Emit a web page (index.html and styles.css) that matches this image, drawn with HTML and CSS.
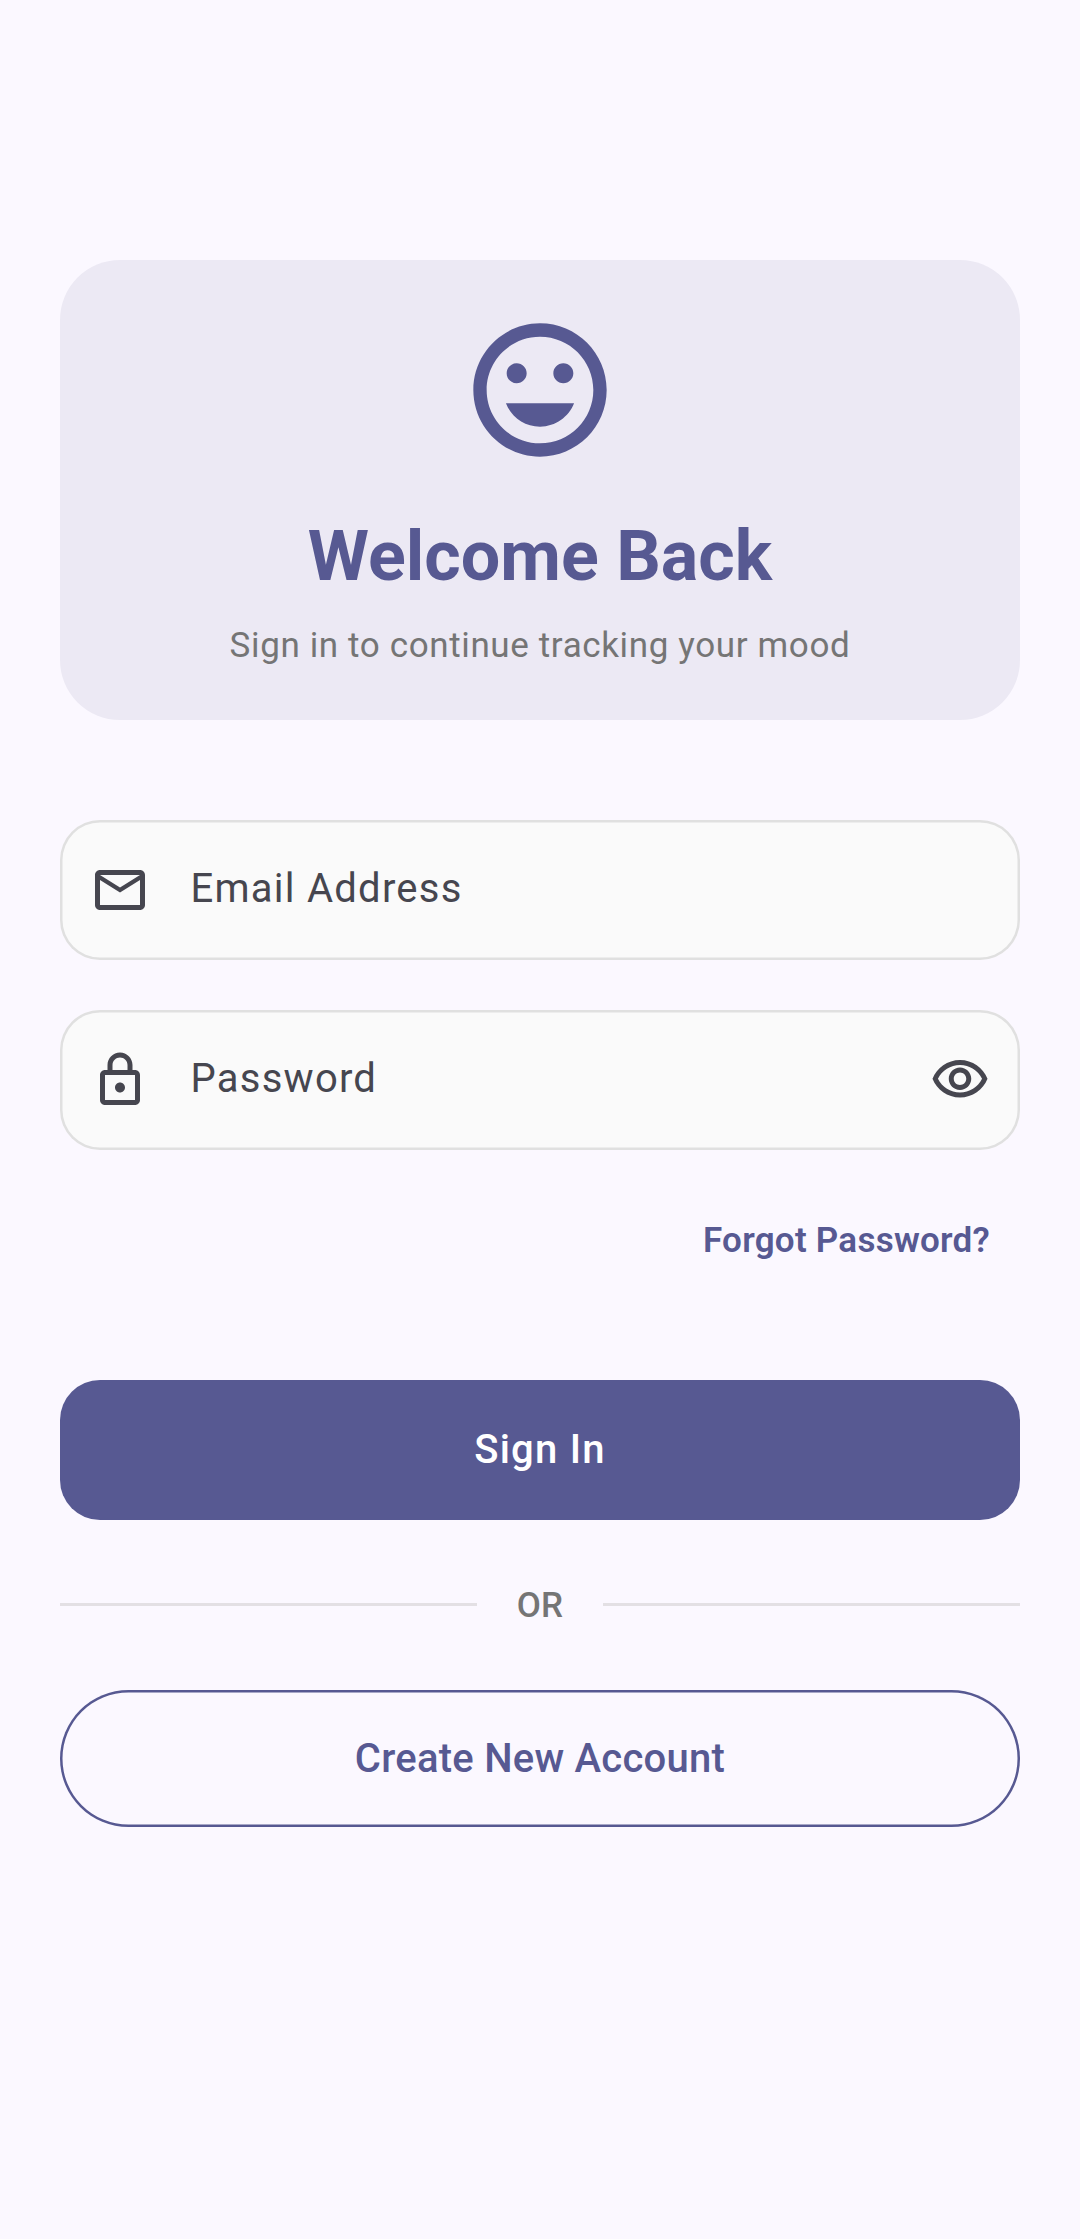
FILE: index.html
```html
<!DOCTYPE html>
<html lang="en">
<head>
<meta charset="utf-8">
<title>Sign In</title>
<link rel="stylesheet" href="styles.css">
</head>
<body>
<main class="screen">
  <section class="hero">
    <svg class="hero-icon" viewBox="0 0 24 24" aria-hidden="true"><path d="M11.99 2C6.47 2 2 6.48 2 12s4.47 10 9.99 10C17.52 22 22 17.52 22 12S17.52 2 11.99 2zM12 20c-4.42 0-8-3.58-8-8s3.58-8 8-8 8 3.58 8 8-3.58 8-8 8zm3.500-9c.83 0 1.500-.67 1.500-1.500S16.330 8 15.500 8 14 8.670 14 9.500s.67 1.500 1.500 1.500zm-7 0c.83 0 1.500-.67 1.500-1.500S9.330 8 8.500 8 7 8.670 7 9.500 7.670 11 8.500 11zm3.500 6.500c2.330 0 4.310-1.460 5.110-3.500H6.890c.8 2.040 2.780 3.500 5.110 3.500z"/></svg>
    <h1 class="title">Welcome Back</h1>
    <p class="subtitle">Sign in to continue tracking your mood</p>
  </section>
  <form class="form">
    <div class="field">
      <svg class="icon" viewBox="0 0 24 24" aria-hidden="true"><path d="M22 6c0-1.100-.9-2-2-2H4c-1.100 0-2 .9-2 2v12c0 1.100.9 2 2 2h16c1.100 0 2-.9 2-2V6zm-2 0l-8 5-8-5h16zm0 12H4V8l8 5 8-5v10z"/></svg>
      <span class="label">Email Address</span>
    </div>
    <div class="field">
      <svg class="icon" viewBox="0 0 24 24" aria-hidden="true"><path d="M18 8h-1V6c0-2.760-2.240-5-5-5S7 3.240 7 6v2H6c-1.100 0-2 .9-2 2v10c0 1.100.9 2 2 2h12c1.100 0 2-.9 2-2V10c0-1.100-.9-2-2-2zM9 6c0-1.660 1.340-3 3-3s3 1.340 3 3v2H9V6zm9 14H6V10h12v10zm-6-3c1.100 0 2-.9 2-2s-.9-2-2-2-2 .9-2 2 .9 2 2 2z"/></svg>
      <span class="label">Password</span>
      <svg class="icon" viewBox="0 0 24 24" aria-hidden="true"><path d="M12 6c3.790 0 7.170 2.130 8.820 5.500C19.170 14.870 15.790 17 12 17s-7.170-2.130-8.820-5.500C4.830 8.130 8.210 6 12 6m0-2C7 4 2.730 7.110 1 11.500 2.730 15.890 7 19 12 19s9.270-3.110 11-7.500C21.270 7.110 17 4 12 4zm0 5c1.380 0 2.500 1.120 2.500 2.500S13.380 14 12 14s-2.500-1.120-2.500-2.500S10.620 9 12 9m0-2c-2.480 0-4.500 2.020-4.500 4.500S9.520 16 12 16s4.500-2.020 4.500-4.500S14.480 7 12 7z"/></svg>
    </div>
    <a class="forgot">Forgot Password?</a>
    <button class="button primary" type="button">Sign In</button>
    <div class="divider"><span class="or">OR</span></div>
    <button class="button outlined" type="button">Create New Account</button>
  </form>
</main>
</body>
</html>
```
FILE: styles.css
```css
* { box-sizing: border-box; }

body {
  margin: 0;
  background: #fbf8ff;
  color: #575992;
  font-family: Roboto, "Liberation Sans", sans-serif;
}

.screen {
  height: 2239px;
  padding: 259.5px 60px 0;
}

.hero {
  display: flex;
  flex-direction: column;
  align-items: center;
  height: 460px;
  padding-top: 50px;
  border-radius: 60px;
  background: #ece9f4;
}

.hero-icon {
  width: 160px;
  height: 160px;
  fill: #575992;
}

.title {
  margin: 41px 0 0;
  font-size: 70px;
  font-weight: 700;
  line-height: 90px;
}

.subtitle {
  margin: 20px 0 0;
  color: #757575;
  font-size: 35px;
  line-height: 50px;
  letter-spacing: 0.625px;
}

.form {
  display: flex;
  flex-direction: column;
  margin-top: 100px;
}

.field {
  display: flex;
  align-items: center;
  height: 140px;
  margin-bottom: 50px;
  padding: 0 30px;
  border-radius: 40px;
  background: #fafafa;
  box-shadow: inset 0 0 0 2.5px #e0e0e0;
}

.icon {
  width: 60px;
  height: 60px;
  fill: #46464f;
}

.label {
  flex: 1;
  margin: -1px 0 0 40.5px;
  color: #46464f;
  font-size: 40px;
  line-height: 60px;
  letter-spacing: 1.25px;
}

.forgot {
  align-self: flex-end;
  margin: 16px 30px 0 0;
  font-size: 35px;
  font-weight: 600;
  line-height: 50px;
  letter-spacing: 0.25px;
}

.button {
  padding: 1px 0 0;
  border: 0;
  font: 500 40px/50px Roboto, "Liberation Sans", sans-serif;
}

.primary {
  height: 140px;
  margin-top: 114px;
  border-radius: 40px;
  background: #575992;
  color: #fff;
  letter-spacing: 1.25px;
}

.divider {
  display: flex;
  align-items: center;
  gap: 40px;
  height: 50px;
  margin: 60px 0;
}

.divider::before,
.divider::after {
  content: "";
  flex: 1;
  height: 2.5px;
  background: #e3e0e4;
}

.or {
  padding-top: 2px;
  color: #757575;
  font-size: 35px;
  font-weight: 500;
  line-height: 50px;
  letter-spacing: 0.25px;
}

.outlined {
  height: 137.5px;
  padding-top: 2px;
  border-radius: 70px;
  background: transparent;
  box-shadow: inset 0 0 0 2.5px #575992;
  color: #575992;
  letter-spacing: 0.25px;
}
```
